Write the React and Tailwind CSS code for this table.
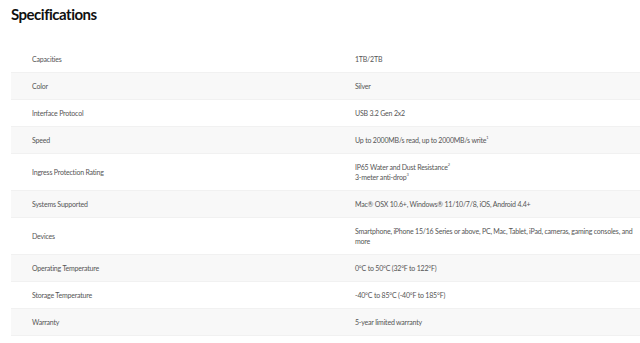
import React from 'react';

const specs = [
    { label: 'Capacities', value: ['1TB/2TB'] },
    { label: 'Color', value: ['Silver'] },
    { label: 'Interface Protocol', value: ['USB 3.2 Gen 2x2'] },
    { label: 'Speed', value: [<>Up to 2000MB/s read, up to 2000MB/s write<sup className="text-[4px] align-[2px]">1</sup></>] },
    {
        label: 'Ingress Protection Rating',
        value: [
            <>IP65 Water and Dust Resistance<sup className="text-[4px] align-[2px]">2</sup></>,
            <>3-meter anti-drop<sup className="text-[4px] align-[2px]">3</sup></>,
        ],
    },
    { label: 'Systems Supported', value: ['Mac® OSX 10.6+, Windows® 11/10/7/8, iOS, Android 4.4+'] },
    { label: 'Devices', value: ['Smartphone, iPhone 15/16 Series or above, PC, Mac, Tablet, iPad, cameras, gaming consoles, and more'] },
    { label: 'Operating Temperature', value: ['0°C to 50°C (32°F to 122°F)'] },
    { label: 'Storage Temperature', value: ['-40°C to 85°C (-40°F to 185°F)'] },
    { label: 'Warranty', value: ['5-year limited warranty'] },
];

const App = () => {
    return (
        <div className="w-[640px] h-[343px] bg-white overflow-hidden font-['Lato','Liberation_Sans',sans-serif]">
            <h2 className="pl-[11px] pt-[4px] h-[46px] text-[15px] leading-[20px] font-bold text-[#111] tracking-[-0.5px]">
                Specifications
            </h2>

            <div className="ml-[11px]">
                {specs.map((row, i) => (
                    <div
                        key={row.label}
                        className={`grid grid-cols-[344px_1fr] items-center py-[8px] border-b border-[#f1f1f1] ${i % 2 === 1 ? 'bg-[#f8f8f8]' : 'bg-white'}`}
                    >
                        <div className="pl-[21px] text-[7px] leading-[10px] tracking-[-0.2px] text-[#555]">{row.label}</div>
                        <div className="pr-[4px] text-[7px] leading-[10px] tracking-[-0.2px] text-[#555]">
                            {row.value.map((v, j) => (
                                <div key={j}>{v}</div>
                            ))}
                        </div>
                    </div>
                ))}
            </div>
        </div>
    );
};

export default App;
